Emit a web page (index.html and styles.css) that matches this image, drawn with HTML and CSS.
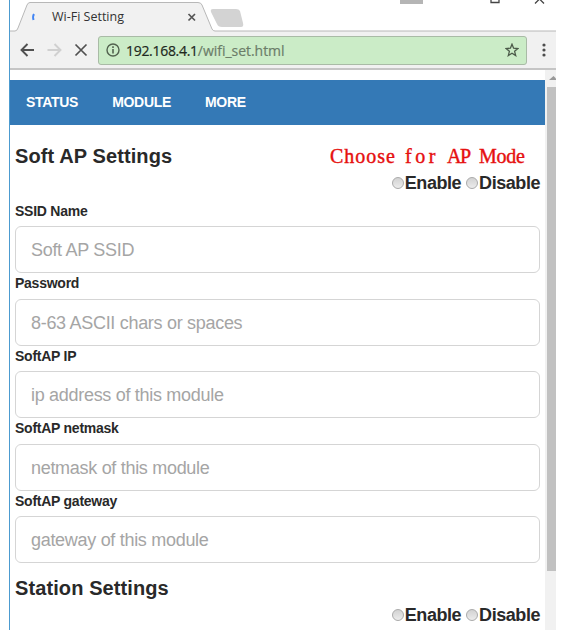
FILE: index.html
```html
<!DOCTYPE html>
<html lang="en">
<head>
<meta charset="utf-8">
<title>Wi-Fi Setting</title>
<link rel="stylesheet" href="styles.css">
</head>
<body>
<div class="window">
  <header class="tabstrip">
    <svg class="tabshape" width="546" height="32" viewBox="0 0 546 32">
      <path d="M-1 31H5Q7 31 8 28L17 5Q18 2.500 20 2.500H188Q191 2.500 192 5L202 29Q203 31 205 31H547V34H-1Z" fill="#f1f1f1" stroke="#b8b8b8"/>
      <path d="M203 9H226Q229 9 230 11L233 23Q234 27 231 27H212Q208 27 207 24L201 12Q200 9 203 9Z" fill="#d3d3d3"/>
      <path d="M24 14Q22.500 16 23.500 20" fill="none" stroke="#4285f4" stroke-width="2"/>
      <path d="M178.500 14L185 20.500M185 14L178.500 20.500" stroke="#555" stroke-width="1.700"/>
      <path d="M390 0H413V4H390Z" fill="#b5b5b5"/>
      <path d="M481 0V2.500H489V0M525 3.500L529.500-1L534 3.500" fill="none" stroke="#444" stroke-width="1.300"/>
    </svg>
    <span class="tabtitle">Wi-Fi Setting</span>
  </header>
  <div class="toolbar">
    <svg class="controls" width="88" height="37" viewBox="0 0 88 37">
      <path d="M24 18H12M17.500 12L11.500 18L17.500 24" fill="none" stroke="#505050" stroke-width="1.900"/>
      <path d="M37.500 18H50M44.500 12L50.500 18L44.500 24" fill="none" stroke="#d0d0d0" stroke-width="1.900"/>
      <path d="M65.500 12.500L76.500 23.500M76.500 12.500L65.500 23.500" stroke="#505050" stroke-width="1.700"/>
    </svg>
    <div class="address">
      <svg width="14" height="14" viewBox="0 0 14 14"><circle cx="7" cy="7" r="6" fill="none" stroke="#52624f" stroke-width="1.400"/><path d="M7 6V10.500M7 3.300V4.900" stroke="#52624f" stroke-width="1.600"/></svg>
      <span class="url"><span class="host">192.168.4.1</span><span class="path">/wifi_set.html</span></span>
      <svg class="star" width="14" height="14" viewBox="0 0 14 14"><path d="M7 1.200L8.600 5.200L12.900 5.500L9.600 8.300L10.700 12.600L7 10.200L3.300 12.600L4.400 8.300L1.100 5.500L5.400 5.200Z" fill="none" stroke="#4b5a49" stroke-width="1.300"/></svg>
    </div>
    <svg width="4" height="16" viewBox="0 0 4 16"><g fill="#4d4d4d"><circle cx="2" cy="3" r="1.600"/><circle cx="2" cy="8" r="1.600"/><circle cx="2" cy="13" r="1.600"/></g></svg>
  </div>
  <div class="viewport">
    <main class="page">
      <nav><span>STATUS</span><span>MODULE</span><span>MORE</span></nav>
      <section>
        <div class="heading"><h2>Soft AP Settings</h2>
          <div class="note"><span class="choose">Choose</span><span class="for">for</span><span class="ap">AP</span><span class="mode">Mode</span></div></div>
        <div class="choices"><label><i></i>Enable</label><label><i></i>Disable</label></div>
        <div class="fields">
          <div class="field"><b>SSID Name</b><div class="input">Soft AP SSID</div></div>
          <div class="field"><b>Password</b><div class="input">8-63 ASCII chars or spaces</div></div>
          <div class="field"><b>SoftAP IP</b><div class="input">ip address of this module</div></div>
          <div class="field"><b>SoftAP netmask</b><div class="input">netmask of this module</div></div>
          <div class="field"><b>SoftAP gateway</b><div class="input">gateway of this module</div></div>
        </div>
      </section>
      <section class="station">
        <div class="heading"><h2>Station Settings</h2></div>
        <div class="choices"><label><i></i>Enable</label><label><i></i>Disable</label></div>
      </section>
    </main>
    <aside class="scrollbar"><svg width="11" height="17" viewBox="0 0 11 17"><path d="M4 10L8.500 6L11 8.500V10Z" fill="#999"/></svg><div class="thumb"></div></aside>
  </div>
</div>
</body>
</html>
```

FILE: styles.css
```css
* { box-sizing: border-box; }
body { margin: 0; background: #fff; font-family: "Liberation Sans", sans-serif; color: #292929; overflow: hidden; }
.window { width: 547px; height: 630px; margin-left: 9px; border-left: 1px solid #4c9bd0; }
svg { display: block; flex: none; }
.tabstrip { position: relative; height: 32px; }
.tabshape { position: absolute; left: 0; top: 0; }
.tabtitle { position: relative; display: block; padding-left: 42px; font: 12.500px/34px "Open Sans", sans-serif; color: #333; white-space: nowrap; }
.toolbar { display: flex; align-items: center; height: 38px; background: #f1f1f1; border-bottom: 2px solid #c5c5c5; }
.address { display: flex; align-items: center; width: 429px; height: 29px; margin-right: 15px; padding: 0 7px; border: 1px solid #a9bba6; border-radius: 3px; background: #cbecc7; }
.url { margin-left: 6px; font: 14px/25px "Open Sans", sans-serif; white-space: nowrap; }
.host { letter-spacing: -.3px; color: #202820; -webkit-text-stroke: .2px #202820; }
.path { color: #6b7d69; letter-spacing: -.03px; -webkit-text-stroke: .2px #6b7d69; }
.star { margin-left: auto; }
.viewport { display: flex; height: 560px; }
.page { width: 535px; padding-top: 10px; }
nav { display: flex; gap: 34px; height: 45px; padding-left: 16px; background: #3479b6; color: #fff; font-size: 14px; font-weight: bold; line-height: 45px; letter-spacing: -.3px; }
section { padding: 17px 5px 0; }
.heading { display: flex; justify-content: space-between; height: 29px; }
h2 { margin: 0; font-size: 20px; line-height: 29px; letter-spacing: .1px; }
.note { display: grid; grid-template-columns: 75px 42px 32px 46px; margin-right: 15px; color: #e60f0f; font: 20px/28px "Liberation Serif", serif; -webkit-text-stroke: .4px #e60f0f; }
.choose { letter-spacing: 1px; }
.for { letter-spacing: 3.500px; }
.ap { letter-spacing: -1.500px; }
.mode { letter-spacing: -.3px; }
.choices { display: flex; justify-content: flex-end; gap: 5px; height: 25px; font-size: 18px; font-weight: bold; line-height: 25px; letter-spacing: -.45px; }
.choices label { display: flex; align-items: center; }
.choices i { width: 12px; height: 12px; margin: -1px 1px 0 0; border: 1px solid #aaa; border-radius: 50%; background: linear-gradient(#d2d2d2, #ececec); }
.fields { height: 367px; padding-top: 5px; }
.field { height: 72.400px; }
.field b { display: block; height: 25.400px; font-size: 14px; line-height: 21px; letter-spacing: -.25px; }
.input { height: 47px; padding-left: 15px; border: 1.500px solid #d5d5d5; border-radius: 6px; color: #a5a5a5; font-size: 18px; line-height: 46px; letter-spacing: -.3px; }
.station { padding-top: 11px; }
.scrollbar { width: 11px; background: #f1f1f1; }
.thumb { height: 484px; margin-left: 2px; background: #c1c1c1; }
```
